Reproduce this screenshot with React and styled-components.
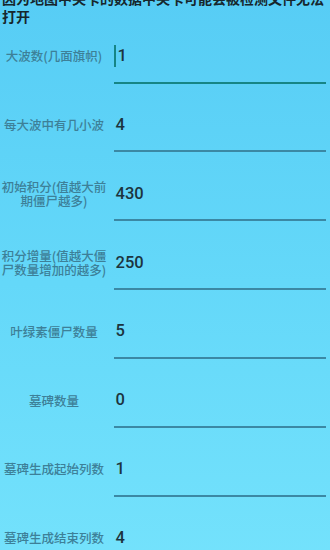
import React from 'react'
import styled, { createGlobalStyle, css } from 'styled-components'

const GlobalStyle = createGlobalStyle`
    html, body, #root {
        margin: 0;
        padding: 0;
        height: 100%;
    }
    body {
        overflow: hidden;
        font-family: "Noto Sans CJK SC", "Noto Sans", sans-serif;
    }
`

const fields = [
    { label: '大波数(几面旗帜)', value: '1', focused: true },
    { label: '每大波中有几小波', value: '4' },
    { label: '初始积分(值越大前期僵尸越多)', value: '430' },
    { label: '积分增量(值越大僵尸数量增加的越多)', value: '250' },
    { label: '叶绿素僵尸数量', value: '5' },
    { label: '墓碑数量', value: '0' },
    { label: '墓碑生成起始列数', value: '1' },
    { label: '墓碑生成结束列数', value: '4' },
]

function FieldRow({ label, value, focused }) {
    return (
        <Row>
            <Label>{label}</Label>
            <Field focused={focused}>
                {focused && <Caret />}
                <Value>{value}</Value>
            </Field>
        </Row>
    )
}

export default function App() {
    return (
        <Screen>
            <GlobalStyle />
            <Notice>因为地图中关卡的数据中关卡可能会被检测文件无法打开</Notice>
            <Form>
                {fields.map(f => <FieldRow key={f.label} {...f} />)}
            </Form>
        </Screen>
    )
}

const Screen = styled.div`
    min-height: 100vh;
    box-sizing: border-box;
    padding: 0 4px 0 2px;
    background: linear-gradient(180deg, #57cdf5 0%, #64d8f9 50%, #74e2fc 100%);
    overflow: hidden;
`

const Notice = styled.div`
    margin-top: -11px;
    font-size: 14px;
    line-height: 18px;
    font-weight: bold;
    color: #16262c;
`

const Form = styled.div`
    display: flex;
    flex-direction: column;
    gap: 14.86px;
    padding-top: 4.5px;
`

const Row = styled.div`
    display: grid;
    grid-template-columns: 110px 1fr;
    align-items: center;
    margin-left: -2px;
`

const Label = styled.div`
    text-align: center;
    font-size: 12.5px;
    line-height: 14.5px;
    font-weight: 500;
    color: #3d8098;
    padding-right: 2px;
`

const Field = styled.div`
    height: 52px;
    display: flex;
    align-items: center;
    margin-left: 4px;
    border-bottom: 2px solid #3b88a4;

    ${({ focused }) => focused && css`
        border-bottom-color: #168585;
    `}
`

const Caret = styled.span`
    width: 1.5px;
    height: 22px;
    background: #168585;
    margin-right: 0.5px;
`

const Value = styled.span`
    font-family: Roboto, "Liberation Sans", sans-serif;
    font-size: 16.5px;
    font-weight: 500;
    color: #1c343e;
    padding-left: 1.5px;
`
